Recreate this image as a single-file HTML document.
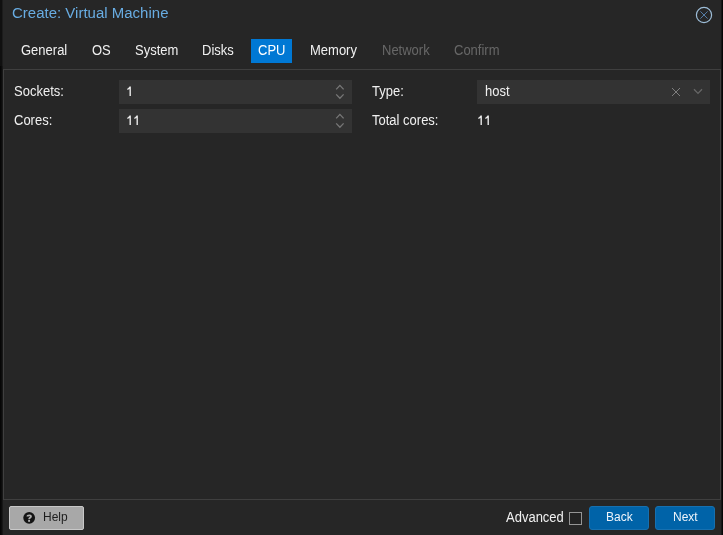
<!DOCTYPE html>
<html><head><meta charset="utf-8">
<style>
*{box-sizing:border-box;margin:0;padding:0}
html,body{width:723px;height:535px;overflow:hidden;background:#262626}
body{position:relative;font-family:"Liberation Sans",sans-serif;color:#f0f0f0;font-size:13px}
.abs{position:absolute}
.t{position:absolute;white-space:nowrap;line-height:16px;font-size:13px;will-change:transform;transform:scaleY(1.06);transform-origin:0 12.5px}
.strip{position:absolute;top:0;bottom:0;background:#111}
.title{font-size:15px;color:#68ace2;line-height:18px;transform:scaleY(1.02);transform-origin:0 14px}
.dis{color:#676767}
.act{position:absolute;background:#0078d4}
.panel{position:absolute;left:3px;top:69px;width:718px;height:431px;border:1px solid #3f3f3f}
.field{position:absolute;height:24px;background:#333}
.btn{position:absolute;top:506px;height:24px;border-radius:3px;background:#0063a8;border:1px solid #1670b0}
.bt{font-size:12px;color:#eef4fa}
</style></head><body>
<div class="strip" style="left:0;width:3px;background:linear-gradient(90deg,#060606 0,#060606 1px,#0c0c0c 1px,#0c0c0c 2px,#171717 2px)"></div>
<div class="abs" style="left:0;top:0;width:3px;height:66px;background:linear-gradient(90deg,#101010 0,#101010 2px,#1c1c1c 2px)"></div>
<div class="strip" style="left:721px;width:2px;background:linear-gradient(90deg,#161616 0,#161616 1px,#060606 1px)"></div>
<div class="t title" style="left:12px;top:4px">Create: Virtual Machine</div>
<svg class="abs" style="left:695px;top:6px" width="18" height="18" viewBox="0 0 18 18">
  <circle cx="9" cy="9" r="7.6" fill="none" stroke="#9dbdd8" stroke-width="1.2"/>
  <path d="M5.4 5.4 L12.6 12.6 M12.6 5.4 L5.4 12.6" stroke="#5a87b3" stroke-width="0.9"/>
</svg>

<div class="act" style="left:251px;top:39px;width:41px;height:24px"></div>
<div class="t" style="left:21px;top:43px">General</div>
<div class="t" style="left:92px;top:43px">OS</div>
<div class="t" style="left:135px;top:43px">System</div>
<div class="t" style="left:202px;top:43px">Disks</div>
<div class="t" style="left:258px;top:43px;color:#fff">CPU</div>
<div class="t" style="left:310px;top:43px">Memory</div>
<div class="t dis" style="left:382px;top:43px">Network</div>
<div class="t dis" style="left:454px;top:43px">Confirm</div>

<div class="panel"></div>

<div class="field" style="left:119px;top:80px;width:233px">
  <svg class="abs" style="left:216px;top:4px" width="10" height="16" viewBox="0 0 10 16">
    <path d="M1.2 5.4 L4.9 1.4 L8.6 5.4 M1.2 10.4 L4.9 14.2 L8.6 10.4" fill="none" stroke="#777" stroke-width="1.3"/>
  </svg>
</div>
<div class="field" style="left:119px;top:109px;width:233px">
  <svg class="abs" style="left:216px;top:4px" width="10" height="16" viewBox="0 0 10 16">
    <path d="M1.2 5.4 L4.9 1.4 L8.6 5.4 M1.2 10.4 L4.9 14.2 L8.6 10.4" fill="none" stroke="#777" stroke-width="1.3"/>
  </svg>
</div>
<div class="field" style="left:477px;top:80px;width:233px">
  <svg class="abs" style="left:194px;top:7px" width="10" height="10" viewBox="0 0 10 10">
    <path d="M1 1 L9 9 M9 1 L1 9" fill="none" stroke="#7e7e7e" stroke-width="1.0"/>
  </svg>
  <svg class="abs" style="left:216px;top:7px" width="10" height="10" viewBox="0 0 10 10">
    <path d="M1 2.2 L5 6.4 L9 2.2" fill="none" stroke="#676767" stroke-width="1.3"/>
  </svg>
</div>

<div class="t" style="left:14px;top:84px">Sockets:</div>
<div class="t" style="left:14px;top:113px">Cores:</div>
<div class="t" style="left:372px;top:84px">Type:</div>
<div class="t" style="left:485px;top:84px">host</div>
<div class="t" style="left:372px;top:113px">Total cores:</div>
<svg class="abs" style="left:0;top:0" width="723" height="535" fill="#e8e8e8"><path transform="translate(129.2 86.5)" d="M0.3 0 L1.7 0 L1.7 9.5 L0.3 9.5 L0.3 2.5 C-0.3 2.9 -1.1 3.2 -1.9 3.4 L-1.9 2.2 C-0.9 1.8 -0.2 1.0 0.3 0 Z"/><path transform="translate(129.2 115.5)" d="M0.3 0 L1.7 0 L1.7 9.5 L0.3 9.5 L0.3 2.5 C-0.3 2.9 -1.1 3.2 -1.9 3.4 L-1.9 2.2 C-0.9 1.8 -0.2 1.0 0.3 0 Z"/><path transform="translate(136.2 115.5)" d="M0.3 0 L1.7 0 L1.7 9.5 L0.3 9.5 L0.3 2.5 C-0.3 2.9 -1.1 3.2 -1.9 3.4 L-1.9 2.2 C-0.9 1.8 -0.2 1.0 0.3 0 Z"/><path transform="translate(480.2 115.5)" d="M0.3 0 L1.7 0 L1.7 9.5 L0.3 9.5 L0.3 2.5 C-0.3 2.9 -1.1 3.2 -1.9 3.4 L-1.9 2.2 C-0.9 1.8 -0.2 1.0 0.3 0 Z"/><path transform="translate(487.2 115.5)" d="M0.3 0 L1.7 0 L1.7 9.5 L0.3 9.5 L0.3 2.5 C-0.3 2.9 -1.1 3.2 -1.9 3.4 L-1.9 2.2 C-0.9 1.8 -0.2 1.0 0.3 0 Z"/></svg>

<div class="btn" style="left:9px;width:75px;background:#a8a8a8;border:1px solid #c8c8c8;border-radius:2px"></div>
<svg class="abs" style="left:21px;top:510px" width="16" height="16" viewBox="0 0 16 16">
  <circle cx="8.16" cy="7.86" r="5.9" fill="#141414"/>
  <path d="M6.4 6.6 C6.4 4.9 10.0 4.8 10.0 6.6 C10.0 7.9 8.1 7.8 8.1 9.2" fill="none" stroke="#b0b0b0" stroke-width="1.8"/>
  <rect x="7.15" y="10.0" width="1.9" height="1.8" fill="#b0b0b0"/>
</svg>
<div class="t bt" style="left:42.5px;top:509px;color:#1e1e1e">Help</div>

<div class="t" style="left:506px;top:510px">Advanced</div>
<div class="abs" style="left:569px;top:512px;width:13px;height:13px;border:1px solid #959595;background:#232323"></div>
<div class="btn" style="left:589px;width:60px"></div>
<div class="t bt" style="left:605.5px;top:509px">Back</div>
<div class="btn" style="left:655px;width:60px"></div>
<div class="t bt" style="left:672.5px;top:509px">Next</div>
</body></html>
